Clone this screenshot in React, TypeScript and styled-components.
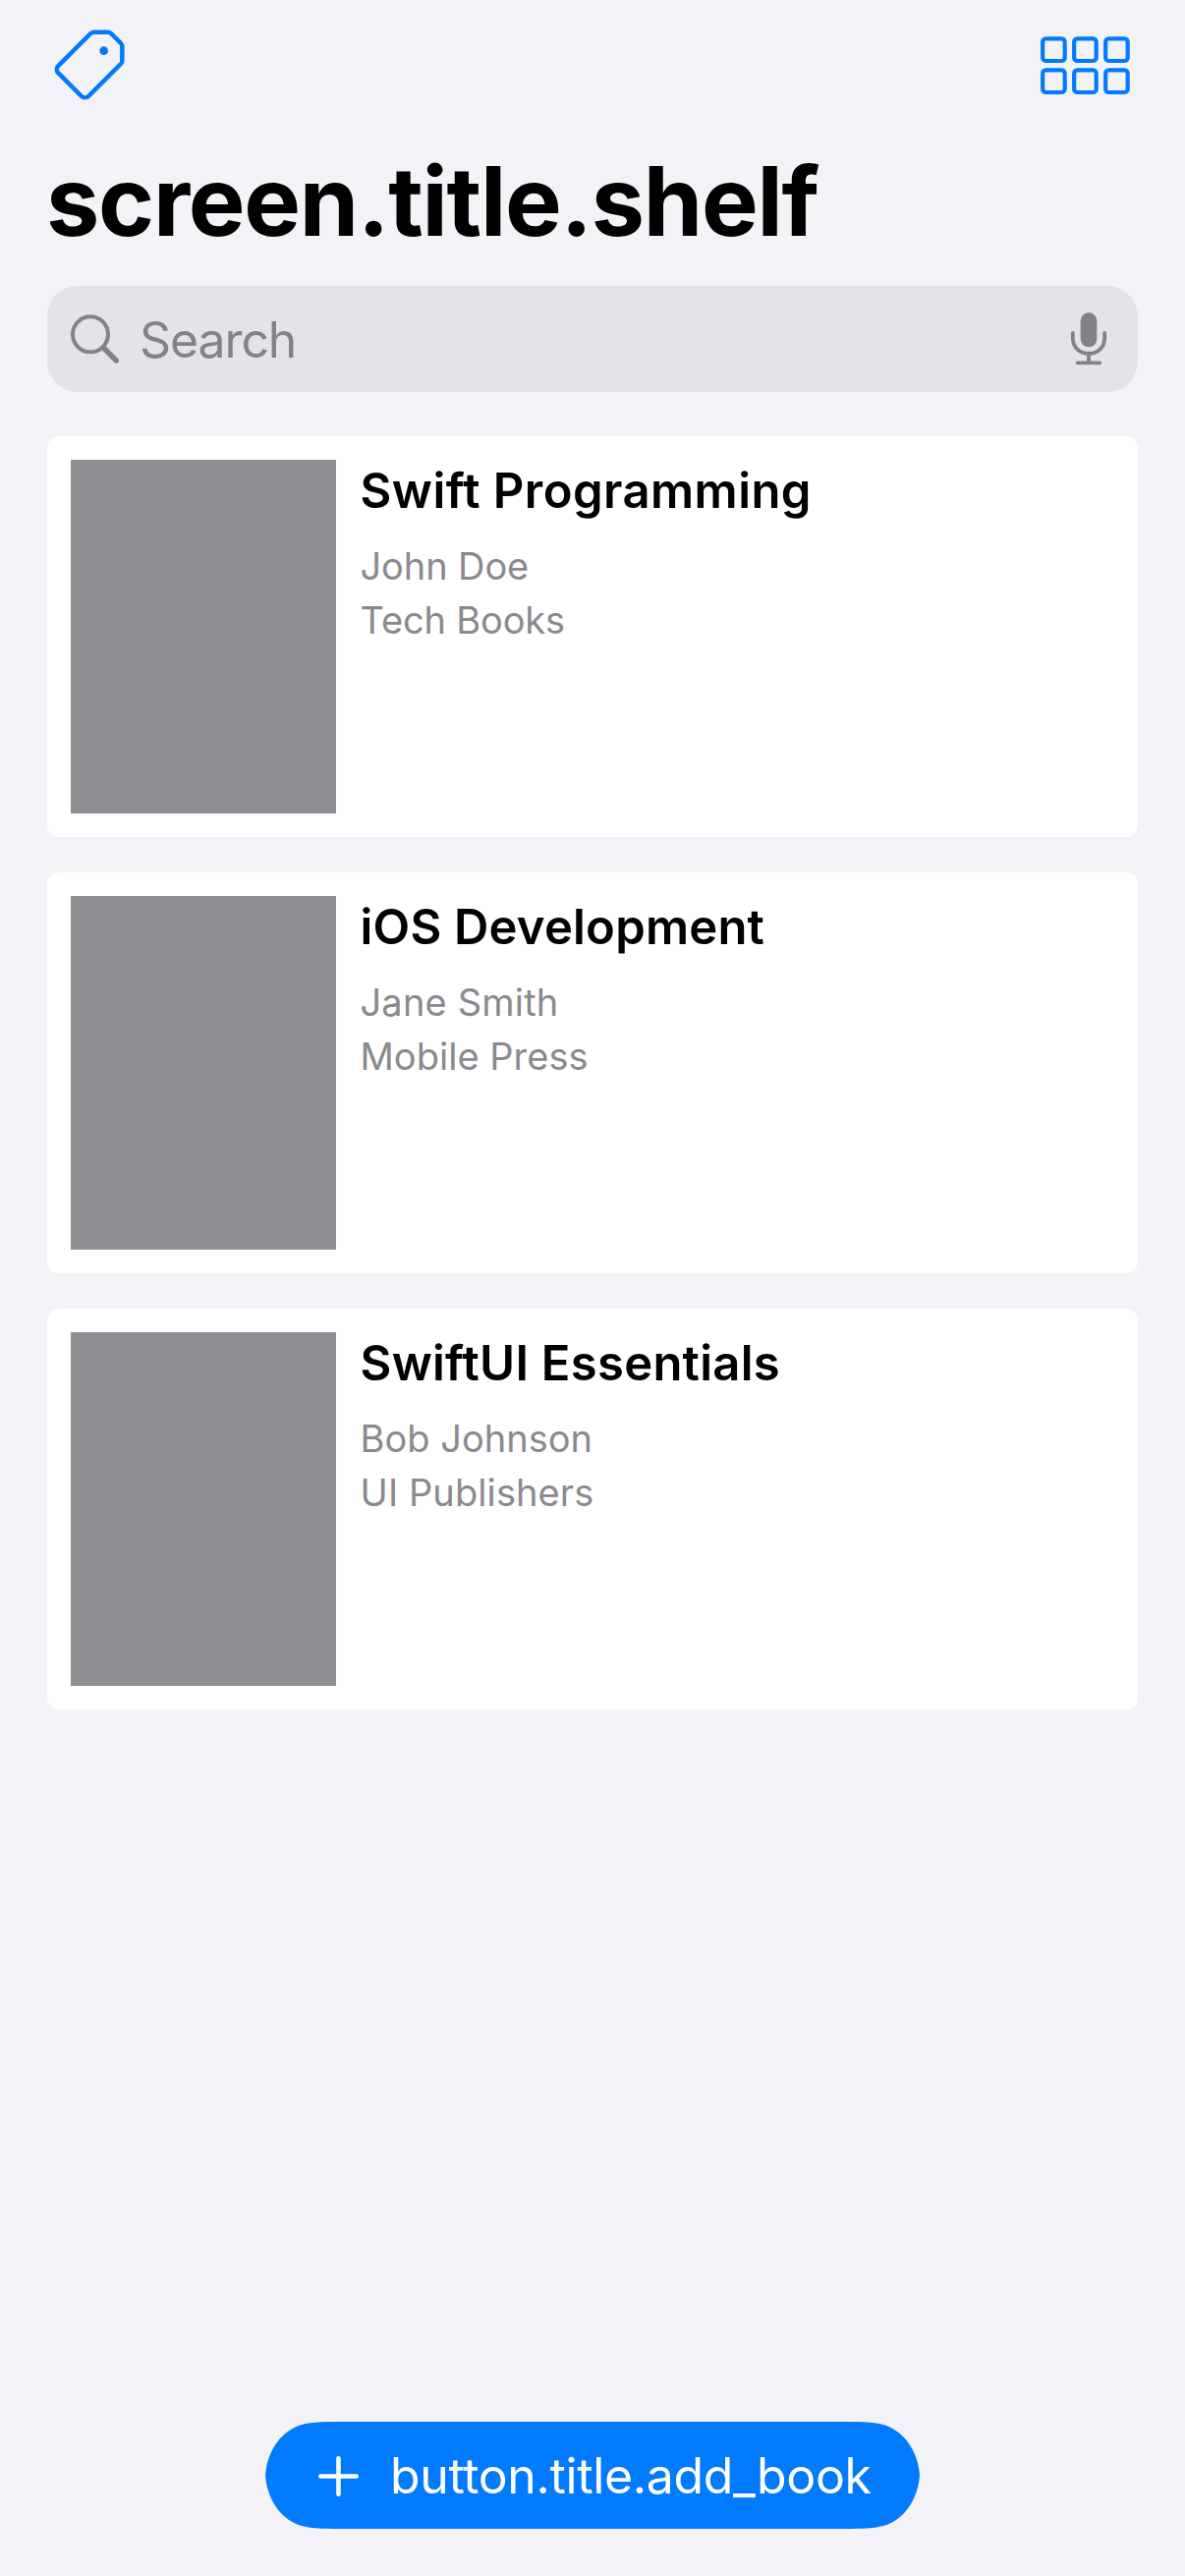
import React from "react";
import styled, { createGlobalStyle } from "styled-components";

const GlobalStyle = createGlobalStyle`
  *, *::before, *::after { box-sizing: border-box; }
  body {
    margin: 0;
    background: #f2f2f7;
    font-family: Inter, "Liberation Sans", sans-serif;
  }
  button { font: inherit; border: 0; padding: 0; background: none; color: inherit; }
`;

const Screen = styled.main`
  display: flex;
  flex-direction: column;
  width: 1206px;
  height: 2622px;
  background: #f2f2f7;
`;

const Toolbar = styled.nav`
  display: flex;
  justify-content: space-between;
  height: 143px;
  padding: 20px 36px 0 40px;
  color: #007aff;
`;

const IconButton = styled.button`
  display: flex;
  height: 100px;
`;

const Title = styled.h1<{ $tracking: number }>`
  margin: 0;
  padding-left: 47px;
  font-size: 97px;
  line-height: 123px;
  font-weight: 700;
  letter-spacing: ${(p) => p.$tracking}px;
  color: #000;
`;

const SearchField = styled.div`
  display: flex;
  align-items: center;
  height: 108px;
  margin: 25px 48px 0;
  padding: 0 26px 0 24px;
  border-radius: 31px;
  background: #e3e3e8;
  color: #838287;
`;

const SearchLabel = styled.span`
  flex: 1;
  padding: 3px 0 0 21px;
  font-size: 50px;
  line-height: 61px;
  letter-spacing: -1.1px;
`;

const BookList = styled.section`
  display: flex;
  flex-direction: column;
  gap: 36px;
  margin: 45px 48px 0;
`;

const BookCard = styled.article`
  display: flex;
  gap: 24px;
  height: 408px;
  padding: 24px;
  border-radius: 12px;
  background: #fff;
`;

const Cover = styled.div`
  flex: none;
  width: 270px;
  height: 360px;
  background: #8e8e93;
`;

const BookInfo = styled.div`
  display: flex;
  flex-direction: column;
  padding-left: 0.5px;
  white-space: nowrap;
`;

const BookTitle = styled.h2<{ $tracking: number }>`
  margin: 0 0 18px;
  font-size: 49px;
  line-height: 63px;
  font-weight: 600;
  letter-spacing: ${(p) => p.$tracking}px;
  color: #000;
`;

const BookMeta = styled.p<{ $tracking: number }>`
  margin: 0;
  font-size: 38px;
  line-height: 55px;
  letter-spacing: ${(p) => p.$tracking}px;
  color: #8a8a8e;
`;

const Footer = styled.footer`
  display: flex;
  justify-content: center;
  margin-top: auto;
  padding-bottom: 48px;
`;

const AddButton = styled.button`
  display: flex;
  align-items: center;
  width: 666px;
  height: 109px;
  padding: 1px 0 0 54px;
  background: #007aff;
  color: #fff;
  clip-path: path("M78 0 C56 0 43 0.3 32 4.7 C13 13.2 1.8 32 0 54.5 C1.8 77 13 95.8 32 104.3 C43 108.7 56 109 78 109 H588 C610 109 623 108.7 634 104.3 C653 95.8 664.2 77 666 54.5 C664.2 32 653 13.2 634 4.7 C623 0.3 610 0 588 0 Z");
`;

const AddLabel = styled.span`
  margin-left: 32px;
  font-size: 50px;
  line-height: 61px;
  letter-spacing: -0.37px;
  white-space: nowrap;
`;

const TagIcon = () => (
  <svg width="110" height="100" viewBox="0 0 330 300" fill="none">
    <path
      d="M168 38 L209 38 Q215 38 219 42 L249 72 Q253 76 253 82 L253 125 Q253 131 249 135 L150.8 233.2 A16 16 0 0 1 128.2 233.2 L58.3 163.3 A16 16 0 0 1 58.3 140.7 L157 42 Q161 38 168 38 Z"
      stroke="currentColor"
      strokeWidth="13.5"
    />
    <circle cx="197" cy="95" r="13" fill="currentColor" />
  </svg>
);

const GridIcon = () => (
  <svg width="130" height="100" viewBox="0 0 390 300" fill="none">
    {[58, 154].map((y) =>
      [63.5, 159.5, 255.5].map((x) => (
        <rect
          key={`${x}-${y}`}
          x={x}
          y={y}
          width="67.5"
          height="68"
          rx="10"
          stroke="currentColor"
          strokeWidth="12.5"
        />
      ))
    )}
  </svg>
);

const SearchIcon = () => (
  <svg width="49" height="50" viewBox="96 539 147 150" fill="none" stroke="currentColor">
    <circle cx="156" cy="600" r="54" strokeWidth="12" />
    <path d="M196 641 L235 680" strokeWidth="16" strokeLinecap="round" />
  </svg>
);

const MicIcon = () => (
  <svg width="48" height="56" viewBox="132 113 144 168" fill="none" stroke="currentColor">
    <rect x="179" y="117" width="50" height="105" rx="25" fill="currentColor" stroke="none" />
    <path
      d="M155.5 179 V193 C155.5 222 175 241.5 204 241.5 C233 241.5 252.5 222 252.5 193 V179 M204 241 V270 M170 270 H238"
      strokeWidth="11.5"
      strokeLinecap="round"
    />
  </svg>
);

const PlusIcon = () => (
  <svg width="41" height="41" viewBox="0 0 41 41" stroke="currentColor" strokeWidth="4.6" strokeLinecap="round">
    <path d="M2.3 20.5 H38.7 M20.5 2.3 V38.7" />
  </svg>
);

type Line = { text: string; tracking: number };
type Book = { title: Line; author: Line; publisher: Line };

const books: Book[] = [
  {
    title: { text: "Swift Programming", tracking: 0.44 },
    author: { text: "John Doe", tracking: -0.1 },
    publisher: { text: "Tech Books", tracking: -0.15 },
  },
  {
    title: { text: "iOS Development", tracking: 0.2 },
    author: { text: "Jane Smith", tracking: 0.18 },
    publisher: { text: "Mobile Press", tracking: 0.02 },
  },
  {
    title: { text: "SwiftUI Essentials", tracking: 0.26 },
    author: { text: "Bob Johnson", tracking: 0.02 },
    publisher: { text: "UI Publishers", tracking: 0.1 },
  },
];

export default function App() {
  return (
    <>
      <GlobalStyle />
      <Screen>
        <Toolbar>
          <IconButton aria-label="Tags">
            <TagIcon />
          </IconButton>
          <IconButton aria-label="Grid view">
            <GridIcon />
          </IconButton>
        </Toolbar>
        <Title $tracking={-1.25}>screen.title.shelf</Title>
        <SearchField>
          <SearchIcon />
          <SearchLabel>Search</SearchLabel>
          <MicIcon />
        </SearchField>
        <BookList>
          {books.map((book) => (
            <BookCard key={book.title.text}>
              <Cover />
              <BookInfo>
                <BookTitle $tracking={book.title.tracking}>{book.title.text}</BookTitle>
                <BookMeta $tracking={book.author.tracking}>{book.author.text}</BookMeta>
                <BookMeta $tracking={book.publisher.tracking}>{book.publisher.text}</BookMeta>
              </BookInfo>
            </BookCard>
          ))}
        </BookList>
        <Footer>
          <AddButton>
            <PlusIcon />
            <AddLabel>button.title.add_book</AddLabel>
          </AddButton>
        </Footer>
      </Screen>
    </>
  );
}
